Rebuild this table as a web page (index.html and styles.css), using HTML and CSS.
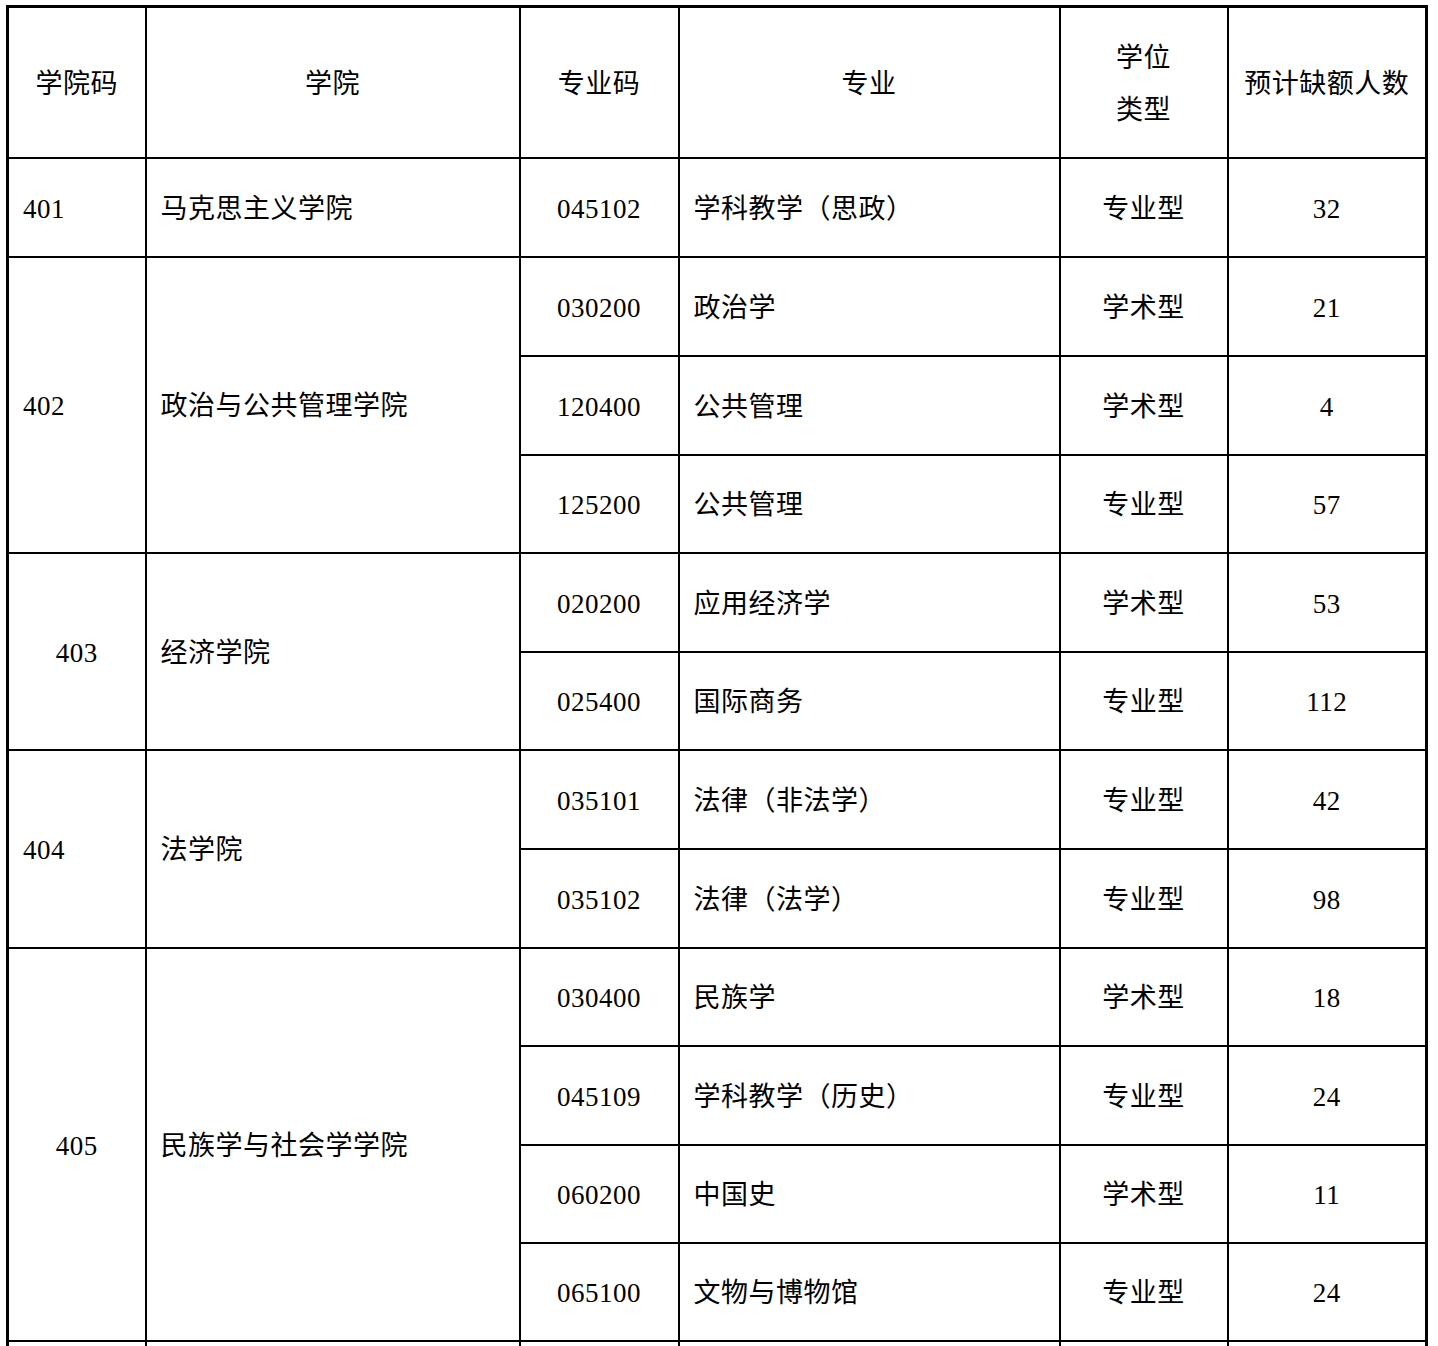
FILE: index.html
```html
<!DOCTYPE html>
<html lang="zh-CN">
<head>
<meta charset="utf-8">
<title>预计缺额人数</title>
<link rel="stylesheet" href="styles.css">
</head>
<body>
<table class="quota">
  <colgroup>
    <col class="c1"><col class="c2"><col class="c3"><col class="c4"><col class="c5"><col class="c6">
  </colgroup>
  <thead>
    <tr class="head">
      <th>学院码</th>
      <th>学院</th>
      <th>专业码</th>
      <th>专业</th>
      <th><span class="two">学位<br>类型</span></th>
      <th>预计缺额人数</th>
    </tr>
  </thead>
  <tbody>
    <tr class="r99">
      <td class="left">401</td>
      <td class="left">马克思主义学院</td>
      <td>045102</td>
      <td class="left">学科教学（思政）</td>
      <td>专业型</td>
      <td>32</td>
    </tr>
    <tr class="r99">
      <td class="left" rowspan="3">402</td>
      <td class="left" rowspan="3">政治与公共管理学院</td>
      <td>030200</td>
      <td class="left">政治学</td>
      <td>学术型</td>
      <td>21</td>
    </tr>
    <tr class="r99">
      <td>120400</td>
      <td class="left">公共管理</td>
      <td>学术型</td>
      <td>4</td>
    </tr>
    <tr class="r98">
      <td>125200</td>
      <td class="left">公共管理</td>
      <td>专业型</td>
      <td>57</td>
    </tr>
    <tr class="r99">
      <td rowspan="2">403</td>
      <td class="left" rowspan="2">经济学院</td>
      <td>020200</td>
      <td class="left">应用经济学</td>
      <td>学术型</td>
      <td>53</td>
    </tr>
    <tr class="r98">
      <td>025400</td>
      <td class="left">国际商务</td>
      <td>专业型</td>
      <td>112</td>
    </tr>
    <tr class="r99">
      <td class="left" rowspan="2">404</td>
      <td class="left" rowspan="2">法学院</td>
      <td>035101</td>
      <td class="left">法律（非法学）</td>
      <td>专业型</td>
      <td>42</td>
    </tr>
    <tr class="r99">
      <td>035102</td>
      <td class="left">法律（法学）</td>
      <td>专业型</td>
      <td>98</td>
    </tr>
    <tr class="r98">
      <td rowspan="4">405</td>
      <td class="left" rowspan="4">民族学与社会学学院</td>
      <td>030400</td>
      <td class="left">民族学</td>
      <td>学术型</td>
      <td>18</td>
    </tr>
    <tr class="r99">
      <td>045109</td>
      <td class="left">学科教学（历史）</td>
      <td>专业型</td>
      <td>24</td>
    </tr>
    <tr class="r98">
      <td>060200</td>
      <td class="left">中国史</td>
      <td>学术型</td>
      <td>11</td>
    </tr>
    <tr class="r98">
      <td>065100</td>
      <td class="left">文物与博物馆</td>
      <td>专业型</td>
      <td>24</td>
    </tr>
    <tr class="r99">
      <td></td><td></td><td></td><td></td><td></td><td></td>
    </tr>
  </tbody>
</table>
</body>
</html>
```

FILE: styles.css
```css
html, body {
  margin: 0;
  padding: 0;
  background: #ffffff;
  overflow: hidden;
}

body {
  padding: 5px 0 0 6px;
  font-family: "Liberation Serif", "Noto Sans CJK SC", serif;
  font-size: 27px;
  letter-spacing: 0.5px;
  color: #000000;
}

.quota {
  border-collapse: collapse;
  table-layout: fixed;
  width: 1419px;
  border: 3px solid #000;
}

.c1 { width: 138px; }
.c2 { width: 374px; }
.c3 { width: 159px; }
.c4 { width: 381px; }
.c5 { width: 168px; }
.c6 { width: 199px; }

.quota th,
.quota td {
  border: 2px solid #000;
  padding: 2px 0 0 0;
  text-align: center;
  vertical-align: middle;
  font-weight: normal;
  line-height: 30px;
  white-space: nowrap;
}

.quota td.left {
  text-align: left;
  padding-left: 14px;
}

.head th {
  height: 147px;
}

.two {
  display: inline-block;
  line-height: 52px;
}

.r99 td { height: 95px; }
.r98 td { height: 94px; }
```
